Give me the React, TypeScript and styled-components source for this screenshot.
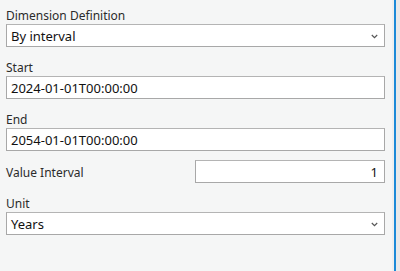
import styled, { createGlobalStyle } from "styled-components";

// Page reset
const GlobalStyle = createGlobalStyle`
  html, body {
    margin: 0;
    padding: 0;
    background: #f5f6f6;
  }
  * {
    box-sizing: border-box;
  }
`;

// Small chevron used by the dropdowns
function Chevron() {
  return (
    <svg width="7" height="5" viewBox="0 0 7 5">
      <path d="M0.8 1 L3.5 3.6 L6.2 1" fill="none" stroke="#555" strokeWidth="1.2" />
    </svg>
  );
}

// Props for a labelled field
interface FieldProps {
  label: string;
  value: string;
  dropdown?: boolean;
}

// A label sitting above its input
function Field(props: FieldProps) {
  return (
    <FieldContainer>
      <FieldLabel>{props.label}</FieldLabel>
      <InputBox>
        <InputText>{props.value}</InputText>
        {props.dropdown && <Chevron />}
      </InputBox>
    </FieldContainer>
  );
}

function App() {
  return (
    <>
      <GlobalStyle />
      <Window>
        <Panel>
          <Field label="Dimension Definition" value="By interval" dropdown />
          <Field label="Start" value="2024-01-01T00:00:00" />
          <Field label="End" value="2054-01-01T00:00:00" />
          <InlineRow>
            <InlineLabel>Value Interval</InlineLabel>
            <InputBox $align="right" $grow>
              <InputText>1</InputText>
            </InputBox>
          </InlineRow>
          <Field label="Unit" value="Years" dropdown />
        </Panel>
        <Separator />
        <FocusLine />
        <Gutter />
      </Window>
    </>
  );
}
export default App;

// Whole window
const Window = styled.div`
  display: flex;
  width: 400px;
  height: 271px;
  background: #f5f6f6;
  font-family: "Noto Sans", "Open Sans", sans-serif;
  font-size: 12px;
  color: #222;
`;

// Form panel
const Panel = styled.div`
  flex: 1;
  display: flex;
  flex-direction: column;
  padding: 7px 7px 0 6px;
`;

// Column of label + input
const FieldContainer = styled.div`
  display: flex;
  flex-direction: column;
  margin-bottom: 12px;
`;

const FieldLabel = styled.div`
  line-height: 17px;
  height: 17px;
  color: #2b2b2b;
`;

// The white input box
const InputBox = styled.div<{ $align?: "left" | "right"; $grow?: boolean }>`
  ${(p) => (p.$grow ? "flex: 1;" : "")}
  height: 23px;
  display: flex;
  align-items: center;
  justify-content: ${(p) => (p.$align === "right" ? "flex-end" : "space-between")};
  padding: 1px 6px 0 4px;
  background: #fff;
  border: 1px solid #a8a8a8;
  border-top-color: #b4b4b4;
`;

const InputText = styled.span`
  font-size: 13px;
  color: #111;
  white-space: nowrap;
`;

// Row with a label to the left of its input
const InlineRow = styled.div`
  display: flex;
  align-items: center;
  margin-top: -3px;
  margin-bottom: 12px;
`;

const InlineLabel = styled.div`
  width: 189px;
  padding-top: 2px;
  color: #2b2b2b;
`;

const Separator = styled.div`
  width: 2px;
  background: #eef0f0;
`;

const FocusLine = styled.div`
  width: 2px;
  background: #1c8ad8;
`;

const Gutter = styled.div`
  width: 4px;
  background: #e9e9e9;
`;
